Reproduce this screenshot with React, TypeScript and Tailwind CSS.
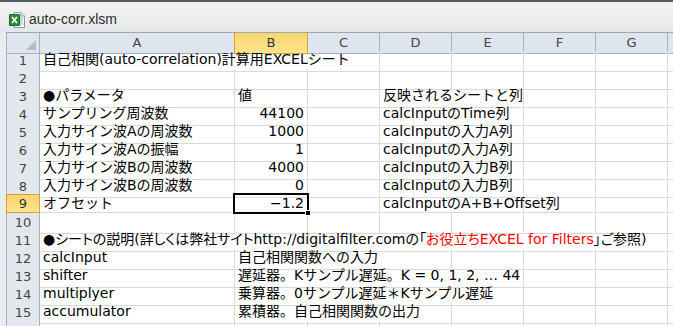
import React from 'react';

type CellDef = { span?: number; text?: React.ReactNode; right?: boolean; sel?: boolean; tight?: boolean };

const spanCls: Record<number, string> = {
  1: 'col-span-1',
  2: 'col-span-2',
  3: 'col-span-3',
  4: 'col-span-4',
  5: 'col-span-5',
  6: 'col-span-6',
  7: 'col-span-7',
};

const E: CellDef = {};

const rows: CellDef[][] = [
  [{ span: 3, text: '自己相関(auto-correlation)計算用EXCELシート' }, E, E, E, E],
  [E, E, E, E, E, E, E],
  [{ text: '●パラメータ' }, { text: '値' }, E, { span: 2, text: '反映されるシートと列' }, E, E],
  [{ text: 'サンプリング周波数' }, { text: '44100', right: true }, E, { span: 2, text: 'calcInputのTime列' }, E, E],
  [{ text: '入力サイン波Aの周波数' }, { text: '1000', right: true }, E, { span: 2, text: 'calcInputの入力A列' }, E, E],
  [{ text: '入力サイン波Aの振幅' }, { text: '1', right: true }, E, { span: 2, text: 'calcInputの入力A列' }, E, E],
  [{ text: '入力サイン波Bの周波数' }, { text: '4000', right: true }, E, { span: 2, text: 'calcInputの入力B列' }, E, E],
  [{ text: '入力サイン波Bの周波数' }, { text: '0', right: true }, E, { span: 2, text: 'calcInputの入力B列' }, E, E],
  [{ text: 'オフセット' }, { text: '−1.2', right: true, sel: true }, E, { span: 2, text: 'calcInputのA+B+Offset列' }, E, E],
  [E, E, E, E, E, E, E],
  [
    {
      span: 7,
      tight: true,
      text: (
        <>
          ●シートの説明(詳しくは弊社サイトhttp://digitalfilter.comの「
          <span className="text-[#ff0000]">お役立ちEXCEL for Filters</span>」ご参照)
        </>
      ),
    },
  ],
  [{ text: 'calcInput' }, { span: 3, text: '自己相関関数への入力' }, E, E, E],
  [{ text: 'shifter' }, { span: 4, text: '遅延器。Kサンプル遅延。K = 0, 1, 2, … 44' }, E, E],
  [{ text: 'multiplyer' }, { span: 4, text: '乗算器。0サンプル遅延＊Kサンプル遅延' }, E, E],
  [{ text: 'accumulator' }, { span: 3, text: '累積器。自己相関関数の出力' }, E, E, E],
  [E, E, E, E, E, E, E],
];

const GRID = 'grid grid-cols-[34px_195px_73px_72px_72px_72px_72px_72px_5px]';

function ExcelIcon() {
  return (
    <svg width="16" height="17" viewBox="0 0 16 17">
      <path d="M5 1.5h7l3.5 3.5v11.5H5z" fill="#fbfcfd" stroke="#8a9aab" />
      <path d="M12 1.5v3.5h3.5" fill="#e6ebf0" stroke="#8a9aab" />
      <path d="M9 7h5M9 9h5M9 11h5M9 13h5" stroke="#9bb0c6" strokeWidth="1" />
      <rect x="0.5" y="3.5" width="10" height="11" rx="0.5" fill="#2f8a3a" stroke="#1d6a27" />
      <path d="M3 6l5 6M8 6l-5 6" stroke="#ffffff" strokeWidth="1.6" />
    </svg>
  );
}

export default function App() {
  const cols = ['A', 'B', 'C', 'D', 'E', 'F', 'G'];
  return (
    <div className="w-[673px] h-[326px] overflow-hidden bg-white font-['DejaVu_Sans','Noto_Sans_CJK_JP',sans-serif] text-[14px] text-black">
      {/* Title bar */}
      <div className="h-[32px] border-t-2 border-[#585d63] bg-[linear-gradient(to_bottom,#f3f3f3_0%,#ededed_65%,#e1e8eb_100%)] flex items-center pl-[9px] gap-[4px]">
        <div className="mt-[4px]">
          <ExcelIcon />
        </div>
        <span className="font-['Liberation_Sans',sans-serif] text-[14px] text-[#2c2c2c] mt-[4px]">auto-corr.xlsm</span>
      </div>

      <div className="flex">
        <div className="w-[6px] shrink-0 bg-[#e9edf1]" />
        <div className="flex-1">
          {/* Column header */}
          <div className={`${GRID} h-[19px] border-t border-[#9ea6b0]`}>
            <div className="relative bg-[#dfe5ee] border-l border-r border-b border-[#a9b1bc]">
              <svg className="absolute right-[3px] bottom-[3px]" width="10" height="10" viewBox="0 0 10 10">
                <path d="M10 0V10H0z" fill="#b4bcc6" />
              </svg>
            </div>
            {cols.map((c) =>
              c === 'B' ? (
                <div
                  key={c}
                  className="bg-[linear-gradient(to_bottom,#f9d66e,#fde48f)] border-l border-r border-b border-[#e49a34] -ml-px flex items-center justify-center text-[13px] text-[#333]"
                >
                  {c}
                </div>
              ) : (
                <div
                  key={c}
                  className="bg-[#dfe5ee] border-r border-b border-[#a9b1bc] flex items-center justify-center text-[13px] text-[#444]"
                >
                  {c}
                </div>
              ),
            )}
            <div className="bg-[#dfe5ee] border-b border-[#a9b1bc]" />
          </div>

          {/* Rows */}
          {rows.map((cells, i) => {
            const n = i + 1;
            const selRow = n === 9;
            return (
              <div key={n} className={`${GRID} h-[18px]`}>
                {selRow ? (
                  <div className="bg-[linear-gradient(to_bottom,#f9d66e,#fde48f)] border-l border-r border-b border-t border-[#e49a34] -mt-px h-[19px] flex items-center justify-center text-[13px] text-[#333]">
                    {n}
                  </div>
                ) : (
                  <div className="bg-[#e3e8ef] border-l border-r border-b border-l-[#a9b1bc] border-r-[#a9b1bc] border-b-[#c8cfd8] flex items-center justify-center text-[13px] text-[#444]">
                    {n < 16 ? n : ''}
                  </div>
                )}
                {cells.map((c, j) => (
                  <div
                    key={j}
                    className={`${spanCls[c.span ?? 1]} relative border-r border-b border-[#dadada] ${
                      c.right ? 'text-right pr-[3px]' : 'pl-[3px]'
                    } whitespace-nowrap leading-[17px] ${c.sel ? 'z-10' : ''} ${
                      c.tight ? "[font-feature-settings:'palt']" : ''
                    }`}
                  >
                    {c.text}
                    {c.sel && (
                      <>
                        <div className="absolute left-[-2px] top-[-2px] w-[76px] h-[21px] border-2 border-black pointer-events-none" />
                        <div className="absolute left-[70px] top-[15px] w-[6px] h-[6px] bg-black border border-white" />
                      </>
                    )}
                  </div>
                ))}
                <div className="border-b border-[#dadada]" />
              </div>
            );
          })}
        </div>
      </div>
    </div>
  );
}
